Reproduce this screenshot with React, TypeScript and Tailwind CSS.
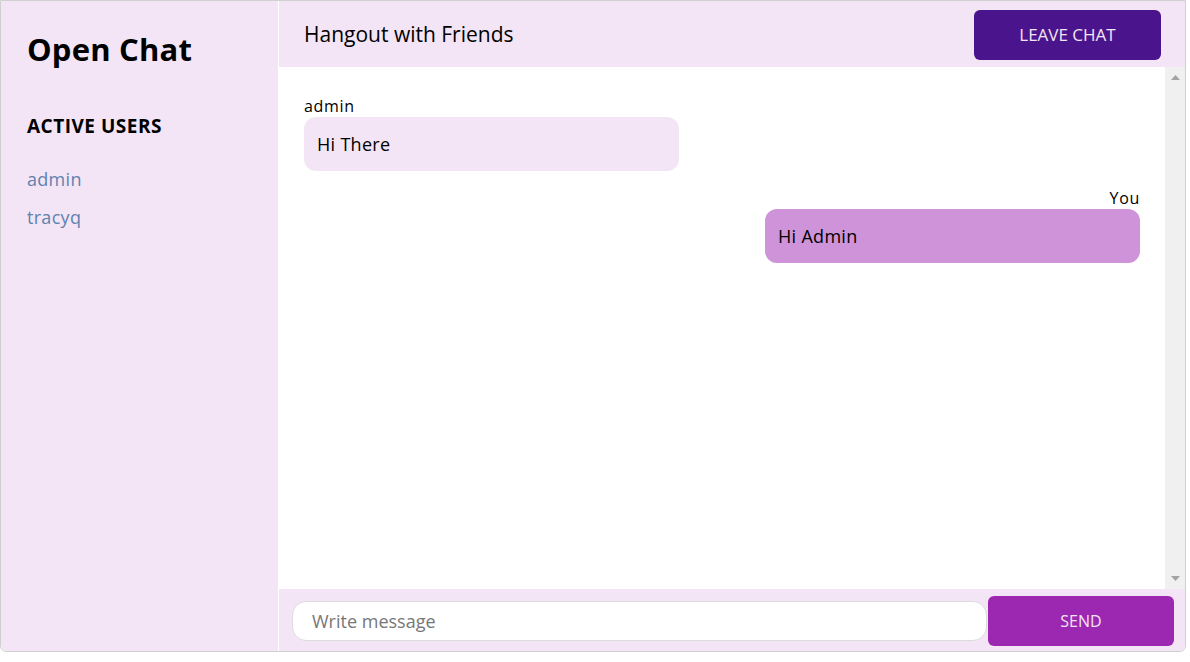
const users = ["admin", "tracyq"];

const font = { fontFamily: '"Open Sans", "Noto Sans", sans-serif' };

function Sidebar() {
  return (
    <aside className="w-[277px] shrink-0 bg-[#f3e5f5] px-[26px] pt-[28px]">
      <h1 className="text-[31px] font-bold leading-[40px] text-black tracking-[0.2px]">Open Chat</h1>
      <h2 className="mt-[43px] text-[19px] font-bold leading-[28px] text-black tracking-[0.5px]">ACTIVE USERS</h2>
      <ul className="mt-[26px] flex flex-col gap-[12px]">
        {users.map((u) => (
          <li key={u} className="text-[18px] leading-[26px] text-[#5f82af] tracking-[0.3px]">
            {u}
          </li>
        ))}
      </ul>
    </aside>
  );
}

function Message({ who, text, mine }: { who: string; text: string; mine?: boolean }) {
  return (
    <div className={mine ? "flex flex-col items-end" : "flex flex-col items-start"}>
      <span className="text-[16px] leading-[20px] mb-[1px] text-black tracking-[0.7px]">{who}</span>
      <div
        className={
          "w-[375px] h-[54px] rounded-[12px] px-[13px] flex items-center text-[18px] tracking-[0.3px] text-black " +
          (mine ? "bg-[#ce93d8]" : "bg-[#f3e5f5]")
        }
      >
        {text}
      </div>
    </div>
  );
}

function Scrollbar() {
  return (
    <div className="w-[20px] shrink-0 bg-[#f0f0f0] flex flex-col items-center justify-between py-[8px]">
      <svg width="9" height="5" viewBox="0 0 9 5">
        <path d="M0 5 L4.5 0 L9 5 Z" fill="#a3a3a3" />
      </svg>
      <svg width="9" height="5" viewBox="0 0 9 5">
        <path d="M0 0 L4.5 5 L9 0 Z" fill="#a3a3a3" />
      </svg>
    </div>
  );
}

export default function App() {
  return (
    <div className="bg-white w-[1190px] h-[662px]" style={font}>
      <div className="w-[1186px] h-[652px] border border-[#d0d0d0] rounded-b-[6px] overflow-hidden flex">
        <Sidebar />
        <main className="flex-1 flex flex-col border-l border-white">
          <header className="h-[66px] shrink-0 bg-[#f3e5f5] flex items-center justify-between pl-[25px] pr-[24px] pt-[2px]">
            <span className="text-[21px] text-black">Hangout with Friends</span>
            <button className="w-[187px] h-[50px] rounded-[6px] bg-[#4a148c] text-[#f3e5f5] text-[17px] font-medium">
              LEAVE CHAT
            </button>
          </header>
          <div className="flex-1 flex bg-white min-h-0">
            <section className="flex-1 pl-[25px] pr-[25px] pt-[29px] flex flex-col gap-[17px]">
              <Message who="admin" text="Hi There" />
              <Message who="You" text="Hi Admin" mine />
            </section>
            <Scrollbar />
          </div>
          <footer className="h-[62px] shrink-0 bg-[#f3e5f5] flex items-center pl-[13px] pr-[11px] pt-[2px] gap-[1px]">
            <input
              className="flex-1 h-[40px] rounded-[14px] border border-[#dcdcdc] bg-white px-[19px] text-[18px] outline-none placeholder:text-[#777]"
              placeholder="Write message"
            />
            <button className="w-[186px] h-[50px] rounded-[6px] bg-[#9c27b0] text-[#f3e5f5] text-[16px] font-medium">
              SEND
            </button>
          </footer>
        </main>
      </div>
    </div>
  );
}
